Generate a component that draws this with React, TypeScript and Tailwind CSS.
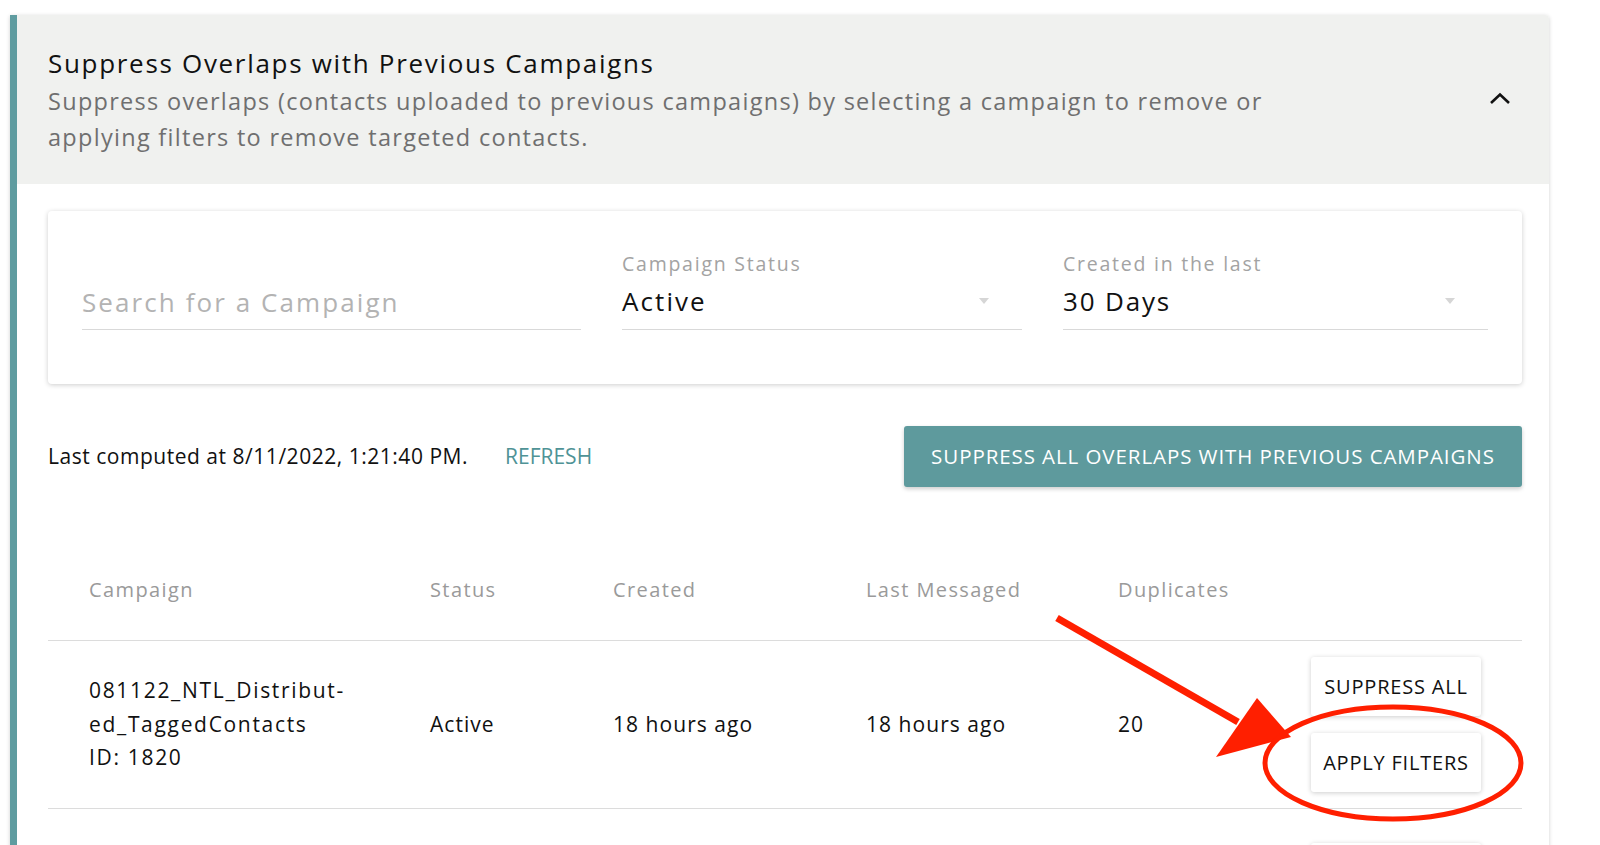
import React from "react";

const font = { fontFamily: '"Open Sans", "Noto Sans", Arial, sans-serif' };

function Arrow() {
  return (
    <svg width="10" height="6" viewBox="0 0 10 6" className="shrink-0">
      <path d="M0 0 L10 0 L5 6 Z" fill="#d6d6d6" />
    </svg>
  );
}

const cols = "grid grid-cols-[341px_183px_253px_252px_193px_170px] pl-[41px] pr-[41px]";

export default function App() {
  return (
    <div className="relative min-h-screen w-full bg-white overflow-hidden" style={font}>
      <div className="pt-[15px] pl-[10px] pr-[51px]">
        <div className="rounded-tr-[4px] border-l-[7px] border-[#5f9ca0] bg-white shadow-[0_1px_4px_rgba(0,0,0,0.18)] h-[900px]">
          {/* header */}
          <div className="flex items-center bg-[#f0f1ef] pl-[31px] pr-[37px] pt-[30px] pb-[29px] rounded-tr-[4px]">
            <div className="flex-1">
              <div className="text-[26px] leading-[36px] tracking-[0.065em] text-[#111]">Suppress Overlaps with Previous Campaigns</div>
              <div className="mt-[2px] text-[23.5px] leading-[36px] tracking-[0.055em] text-[#6f6f6f]">
                Suppress overlaps (contacts uploaded to previous campaigns) by selecting a campaign to remove or
                <br />
                applying filters to remove targeted contacts.
              </div>
            </div>
            <svg width="24" height="24" viewBox="0 0 24 24" className="mb-[2px]">
              <path d="M3 16 L12 7.5 L21 16" fill="none" stroke="#111" strokeWidth="2.6" />
            </svg>
          </div>

          {/* body */}
          <div className="pl-[31px] pr-[27px] pt-[27px]">
            {/* filter card */}
            <div className="rounded-[4px] bg-white shadow-[0_1px_5px_rgba(0,0,0,0.2)] h-[173px] px-[34px] pt-[41px] flex gap-[41px]">
              <div className="w-[499px] flex flex-col justify-end h-[78px] border-b border-[#d9d9d9]">
                <div className="text-[26px] leading-[36px] tracking-[0.08em] text-[#b3b3b3] pb-[9px]">Search for a Campaign</div>
              </div>
              <div className="w-[400px] flex flex-col h-[78px] border-b border-[#d9d9d9]">
                <div className="text-[19.5px] leading-[24px] tracking-[0.09em] text-[#a3a3a3]">Campaign Status</div>
                <div className="flex items-center justify-between pr-[33px] mt-[7px]">
                  <div className="text-[26px] leading-[36px] tracking-[0.08em] text-[#111]">Active</div>
                  <Arrow />
                </div>
              </div>
              <div className="w-[425px] flex flex-col h-[78px] border-b border-[#d9d9d9]">
                <div className="text-[19.5px] leading-[24px] tracking-[0.09em] text-[#a3a3a3]">Created in the last</div>
                <div className="flex items-center justify-between pr-[33px] mt-[7px]">
                  <div className="text-[26px] leading-[36px] tracking-[0.07em] text-[#111]">30 Days</div>
                  <Arrow />
                </div>
              </div>
            </div>

            {/* computed row */}
            <div className="flex items-center justify-between mt-[42px]">
              <div className="flex items-center">
                <span className="text-[21px] tracking-[0.025em] text-[#111]">Last computed at 8/11/2022, 1:21:40 PM.</span>
                <span className="ml-[37px] text-[21px] text-[#4f9396] uppercase">Refresh</span>
              </div>
              <button className="h-[61px] w-[618px] rounded-[3px] bg-[#5e9a9d] text-white text-[20.5px] tracking-[0.045em] uppercase shadow-[0_2px_4px_rgba(0,0,0,0.2)]">
                Suppress all overlaps with previous campaigns
              </button>
            </div>

            {/* table */}
            <div className="mt-[81px]">
              <div className={`${cols} h-[73px] pt-[7px] border-b border-[#dcdcdc] text-[20px] leading-[30px] tracking-[0.07em] text-[#9a9a9a]`}>
                <div>Campaign</div>
                <div>Status</div>
                <div>Created</div>
                <div>Last Messaged</div>
                <div>Duplicates</div>
                <div></div>
              </div>
              <div className={`${cols} items-center h-[168px] border-b border-[#dcdcdc] text-[21px] tracking-[0.05em] text-[#111]`}>
                <div className="leading-[33.5px] tracking-[0.08em]">
                  081122_NTL_Distribut-
                  <br />
                  ed_TaggedContacts
                  <br />
                  ID: 1820
                </div>
                <div>Active</div>
                <div>18 hours ago</div>
                <div>18 hours ago</div>
                <div>20</div>
                <div className="flex flex-col gap-[17px]">
                  <button className="h-[59px] w-[170px] rounded-[3px] bg-white text-[20px] tracking-[0.04em] uppercase text-[#111] shadow-[0_1px_5px_rgba(0,0,0,0.2)]">Suppress all</button>
                  <button className="h-[59px] w-[170px] rounded-[3px] bg-white text-[20px] tracking-[0.04em] uppercase text-[#111] shadow-[0_1px_5px_rgba(0,0,0,0.2)]">Apply filters</button>
                </div>
              </div>
              <div className={`${cols} pt-[34px]`}>
                <div></div><div></div><div></div><div></div><div></div>
                <button className="h-[59px] w-[170px] rounded-[3px] bg-white shadow-[0_1px_5px_rgba(0,0,0,0.2)]"></button>
              </div>
            </div>
          </div>
        </div>
      </div>

      {/* red annotations */}
      <svg className="pointer-events-none absolute left-0 top-0" width="1600" height="845" viewBox="0 0 1600 845">
        <line x1="1057" y1="618" x2="1238" y2="722" stroke="#ff1f00" strokeWidth="7" />
        <polygon points="1291,737 1216,757 1257,698" fill="#ff1f00" />
        <ellipse cx="1393" cy="763" rx="128" ry="56" fill="none" stroke="#ff1f00" strokeWidth="5" />
      </svg>
    </div>
  );
}
